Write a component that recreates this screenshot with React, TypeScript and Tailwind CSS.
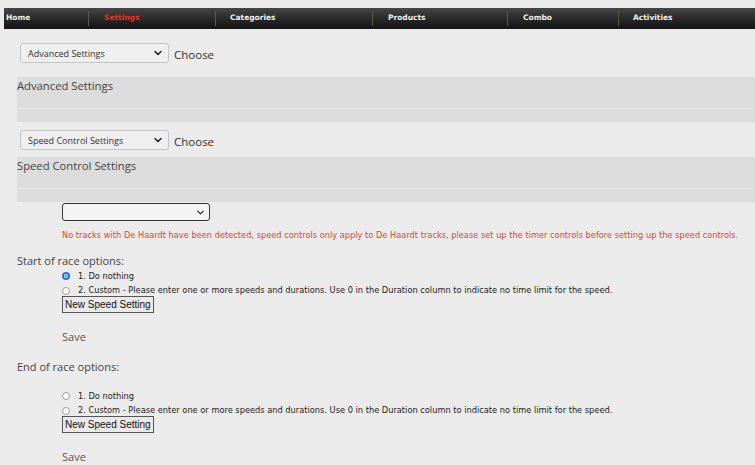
import { ChevronDown } from "lucide-react"

const navItems = [
  { label: "Home", w: "w-[84px]", pl: "pl-[2px]" },
  { label: "Settings", w: "w-[127px]", pl: "pl-[15px]", active: true },
  { label: "Categories", w: "w-[157px]", pl: "pl-[14px]" },
  { label: "Products", w: "w-[135px]", pl: "pl-[15px]" },
  { label: "Combo", w: "w-[111px]", pl: "pl-[15px]" },
  { label: "Activities", w: "flex-1", pl: "pl-[14px]" },
]

const sans = { fontFamily: '"Open Sans", "Liberation Sans", sans-serif' }
const verdana = { fontFamily: '"DejaVu Sans", Verdana, sans-serif' }

function Chooser({ value }: { value: string }) {
  return (
    <div className="flex items-center pl-[20px]" style={sans}>
      <div className="w-[149px] h-[20px] border border-[#c4c4c4] rounded-[3px] bg-[#efefef] flex items-center justify-between pl-[7px] pr-[4px]">
        <span className="text-[9px] text-[#333] leading-none">{value}</span>
        <ChevronDown className="w-[12px] h-[12px] text-[#222]" strokeWidth={3} />
      </div>
      <span className="ml-[5px] mt-[3px] text-[11.5px] text-[#333] leading-none">Choose</span>
    </div>
  )
}

function Band({ title }: { title: string }) {
  return (
    <div className="ml-[17px] bg-[#dcdcdc]" style={sans}>
      <div className="h-[31px] pt-[1px] text-[11.25px] text-[#444] leading-[16px]">{title}</div>
      <div className="h-px bg-[#e8e8e8]" />
      <div className="h-[13px]" />
    </div>
  )
}

function Radio({ checked }: { checked?: boolean }) {
  return checked ? (
    <span className="w-[8px] h-[8px] rounded-full bg-[#1a73e8] flex items-center justify-center">
      <span className="w-[4px] h-[4px] rounded-full bg-[#e8f0fe] flex items-center justify-center">
        <span className="w-[2px] h-[2px] rounded-full bg-[#1a73e8]" />
      </span>
    </span>
  ) : (
    <span className="w-[8px] h-[8px] rounded-full border border-[#9a9a9a] bg-white" />
  )
}

function RaceOptions({ title, first }: { title: string; first?: boolean }) {
  return (
    <div>
      <div className="pl-[17px] h-[18px] flex items-center text-[11px] text-[#444]" style={sans}>
        {title}
      </div>
      {!first && <div className="h-[14px]" />}
      <div className="pl-[62px]" style={verdana}>
        <div className="h-[12px] flex items-center gap-[8px] text-[8.25px] text-[#222]">
          <Radio checked={first} />
          <span>1. Do nothing</span>
        </div>
        <div className="h-[14px] flex items-center gap-[8px] text-[8.25px] text-[#222] pt-[3px]">
          <Radio />
          <span>2. Custom - Please enter one or more speeds and durations. Use 0 in the Duration column to indicate no time limit for the speed.</span>
        </div>
        <button
          className="block h-[17px] px-[2px] border border-[#555] bg-[#e9e9e9] text-[10px] text-[#111] leading-none"
          style={{ fontFamily: '"Liberation Sans", Arial, sans-serif' }}
        >
          New Speed Setting
        </button>
      </div>
      <div className="pl-[62px] h-[22px] mt-[13px] flex items-center text-[11px] text-[#555]" style={sans}>
        Save
      </div>
    </div>
  )
}

export default function App() {
  return (
    <div className="min-h-screen bg-[#ebebeb] pt-[8px] overflow-hidden">
      {/* top nav */}
      <nav
        className="ml-[4px] h-[21px] flex items-center bg-gradient-to-b from-[#474747] via-[#2a2a2a] to-[#141414]"
        style={verdana}
      >
        {navItems.map((item, i) => (
          <div key={item.label} className={`${item.w} h-full flex items-center pb-[1px]`}>
            {i > 0 && <span className="w-px h-[15px] bg-[#5b5a3c]" />}
            <span
              className={`${item.pl} text-[7.5px] font-bold leading-none ${item.active ? "text-[#ff2a1a]" : "text-[#f2f2f2]"}`}
            >
              {item.label}
            </span>
          </div>
        ))}
      </nav>

      <div className="mt-[14px]">
        <Chooser value="Advanced Settings" />
      </div>
      <div className="mt-[14px]">
        <Band title="Advanced Settings" />
      </div>

      <div className="mt-[8px]">
        <Chooser value="Speed Control Settings" />
      </div>
      <div className="mt-[7px]">
        <Band title="Speed Control Settings" />
      </div>

      <div className="pl-[62px] mt-[1px]">
        <div className="w-[148px] h-[18px] border-[1.5px] border-[#333] rounded-[3px] bg-[#f4f4f4] flex items-center justify-end pr-[3px]">
          <ChevronDown className="w-[11px] h-[11px] text-[#333]" strokeWidth={3} />
        </div>
      </div>

      <div className="pl-[62px] mt-[9px] text-[8.25px] text-[#e5432a] leading-[10px] whitespace-nowrap" style={verdana}>
        No tracks with De Haardt have been detected, speed controls only apply to De Haardt tracks, please set up the timer controls before setting up the speed controls.
      </div>

      <div className="mt-[12px]">
        <RaceOptions title="Start of race options:" first />
      </div>
      <div className="mt-[10px]">
        <RaceOptions title="End of race options:" />
      </div>
    </div>
  )
}
